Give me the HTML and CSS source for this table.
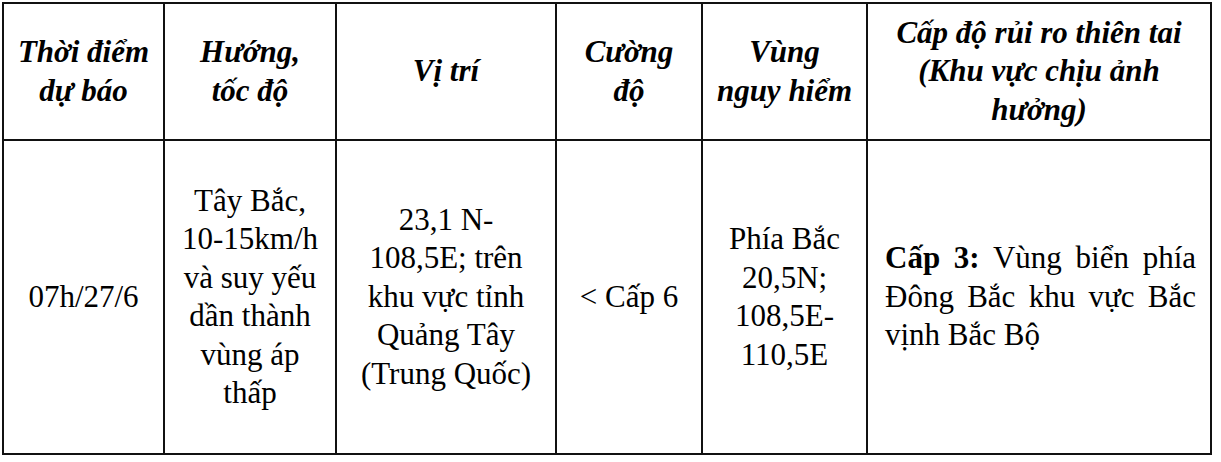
FILE: index.html
```html
<!DOCTYPE html>
<html lang="vi">
<head>
<meta charset="utf-8">
<link rel="stylesheet" href="styles.css">
</head>
<body>
<div class="grid">
  <div class="cell head">Thời điểm<br>dự báo</div>
  <div class="cell head">Hướng,<br>tốc độ</div>
  <div class="cell head">Vị trí</div>
  <div class="cell head">Cường<br>độ</div>
  <div class="cell head">Vùng<br>nguy hiểm</div>
  <div class="cell head">Cấp độ rủi ro thiên tai<br>(Khu vực chịu ảnh<br>hưởng)</div>

  <div class="cell">07h/27/6</div>
  <div class="cell">Tây Bắc,<br>10-15km/h<br>và suy yếu<br>dần thành<br>vùng áp<br>thấp</div>
  <div class="cell">23,1 N-<br>108,5E; trên<br>khu vực tỉnh<br>Quảng Tây<br>(Trung Quốc)</div>
  <div class="cell">&lt; Cấp 6</div>
  <div class="cell">Phía Bắc<br>20,5N;<br>108,5E-<br>110,5E</div>
  <div class="cell just"><p class="para"><b>Cấp 3:</b> Vùng biển phía Đông Bắc khu vực Bắc vịnh Bắc Bộ</p></div>
</div>
</body>
</html>
```

FILE: styles.css
```css
html, body {
  margin: 0;
  padding: 0;
  background: #fff;
}

.grid {
  margin: 2px 0 0 2px;
  display: grid;
  grid-template-columns: 161px 172px 220px 146px 165px 344px;
  grid-template-rows: 137px 314px;
  border-left: 2px solid #111;
  border-top: 2px solid #111;
  width: max-content;
  font-family: "Liberation Serif", "Times New Roman", serif;
  font-size: 31px;
  line-height: 38.5px;
  color: #000;
}

.cell {
  border-right: 2px solid #111;
  border-bottom: 2px solid #111;
  display: flex;
  flex-direction: column;
  justify-content: center;
  align-items: center;
  text-align: center;
}

.head {
  font-weight: bold;
  font-style: italic;
}

.just {
  align-items: stretch;
  padding: 0 14px 0 17px;
}

.para {
  margin: 0;
  text-align: justify;
}
```
